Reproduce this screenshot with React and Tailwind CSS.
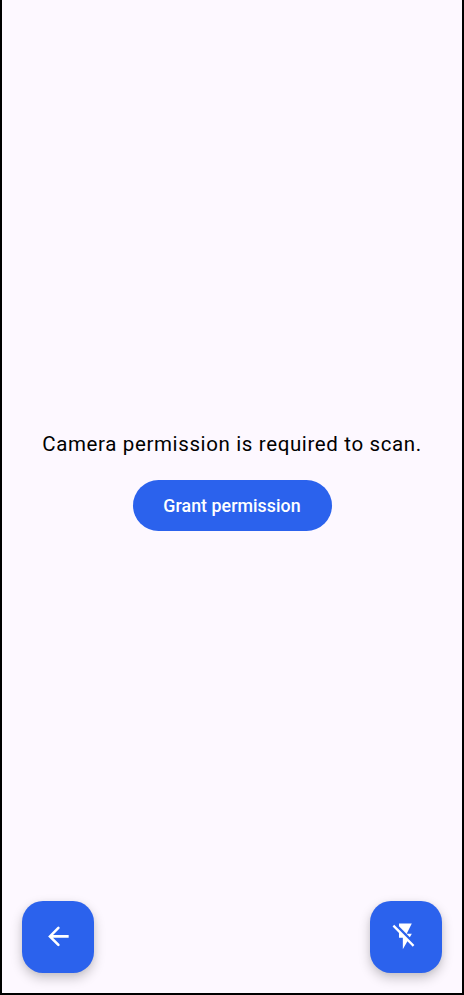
export default function App() {
  return (
    <div className="flex h-[995px] w-[464px] flex-col border-x-2 border-b-2 border-black bg-[#fdf8ff] px-5 pb-[20.4px] font-[Roboto,sans-serif]">
      <main className="flex flex-1 flex-col items-center pt-[427.6px]">
        <p className="h-8 whitespace-nowrap text-[20.5px] leading-8 tracking-[0.63px] text-black">Camera permission is required to scan.</p>
        <button className="mt-5 h-[51px] w-[199px] rounded-full bg-[#2b62ed] pt-[1.5px] text-[17.8px] font-medium tracking-[0.05px] text-white">Grant permission</button>
      </main>
      <footer className="flex justify-between pl-[0.3px] pr-[0.4px]">
        <button aria-label="Back" className="flex size-[71.6px] items-center justify-center rounded-[21px] bg-[#2b62ed] text-white shadow-[0_5px_12px_rgba(0,0,0,0.22),0_1px_5px_rgba(0,0,0,0.05)]">
          <svg viewBox="0 0 24 24" className="size-[30.8px]" fill="currentColor"><path d="M20 11H7.83l4.88-4.88a1 1 0 0 0 0-1.41 1 1 0 0 0-1.42 0L4 12l7.29 7.29a1 1 0 0 0 1.42 0 1 1 0 0 0 0-1.41L7.83 13H20v-2z" /></svg>
        </button>
        <button aria-label="Flash off" className="flex size-[71.6px] items-center justify-center rounded-[21px] bg-[#2b62ed] text-white shadow-[0_5px_12px_rgba(0,0,0,0.22),0_1px_5px_rgba(0,0,0,0.05)]">
          <svg viewBox="0 0 24 24" className="size-[30.8px]" fill="currentColor"><path d="M3.27 3L2 4.27l5 5V13h3v9l3.58-6.14L17.73 20 19 18.73 3.27 3zM17 10h-4l4-8H7v2.18l8.46 8.46L17 10z" /></svg>
        </button>
      </footer>
    </div>
  );
}
